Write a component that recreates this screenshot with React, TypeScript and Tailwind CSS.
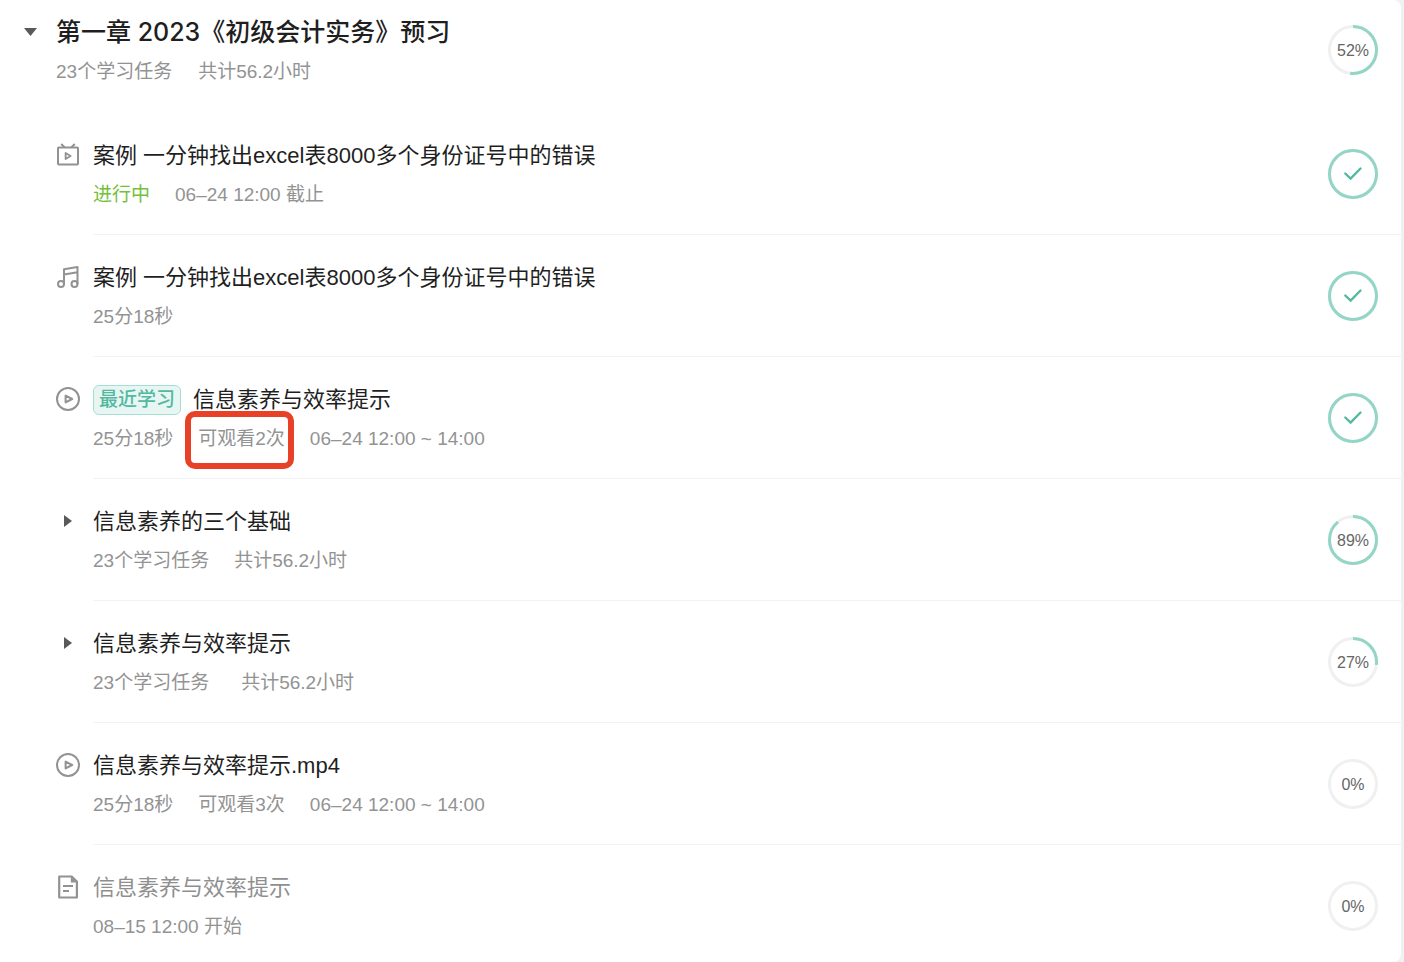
import { ReactNode, useState } from 'react';

interface Lesson {
  icon: 'live' | 'audio' | 'video' | 'doc' | 'folder';
  title: string;
  recent?: boolean;
  locked?: boolean;
  status?: string;
  meta: string[];
  wide?: boolean;
  marked?: number;
  progress: number;
}

const lessons: Lesson[] = [
  {
    icon: 'live',
    title: '案例 一分钟找出excel表8000多个身份证号中的错误',
    status: '进行中',
    meta: ['06–24 12:00 截止'],
    progress: 100,
  },
  {
    icon: 'audio',
    title: '案例 一分钟找出excel表8000多个身份证号中的错误',
    meta: ['25分18秒'],
    progress: 100,
  },
  {
    icon: 'video',
    title: '信息素养与效率提示',
    recent: true,
    meta: ['25分18秒', '可观看2次', '06–24 12:00 ~ 14:00'],
    marked: 1,
    progress: 100,
  },
  {
    icon: 'folder',
    title: '信息素养的三个基础',
    meta: ['23个学习任务', '共计56.2小时'],
    progress: 89,
  },
  {
    icon: 'folder',
    title: '信息素养与效率提示',
    meta: ['23个学习任务', '共计56.2小时'],
    wide: true,
    progress: 27,
  },
  {
    icon: 'video',
    title: '信息素养与效率提示.mp4',
    meta: ['25分18秒', '可观看3次', '06–24 12:00 ~ 14:00'],
    progress: 0,
  },
  {
    icon: 'doc',
    title: '信息素养与效率提示',
    locked: true,
    meta: ['08–15 12:00 开始'],
    progress: 0,
  },
];

const icons: Record<Exclude<Lesson['icon'], 'folder'>, ReactNode> = {
  live: (
    <>
      <rect x="2" y="4.500" width="20" height="17" rx="0.8" />
      <path d="M5.200 1 8.800 4.500M18.800 1 15.200 4.500" />
      <path d="M9.600 10v6l5-3z" strokeWidth="1.800" />
    </>
  ),
  audio: (
    <>
      <circle cx="5" cy="19" r="3" />
      <circle cx="18.500" cy="19" r="3" />
      <path d="M8 19V4.200L21.500 2v17M8 9.500l13.500-2.200" />
    </>
  ),
  video: (
    <>
      <circle cx="12" cy="12" r="11" />
      <path d="M9.600 8.600v6.800l6.600-3.400z" />
    </>
  ),
  doc: (
    <>
      <path d="M3.200 1.500h12.500l5.200 5v16H3.200z" strokeWidth="2.200" />
      <path d="M14.800 1.500v6h6z" fill="currentColor" stroke="none" />
      <path d="M7 11h10M7 16h6" />
    </>
  ),
};

function LessonIcon({ name }: { name: keyof typeof icons }) {
  return (
    <svg
      viewBox="0 0 24 24"
      className="size-6 text-[#929292]"
      fill="none"
      stroke="currentColor"
      strokeWidth="2"
      strokeLinejoin="round"
      aria-hidden="true"
    >
      {icons[name]}
    </svg>
  );
}

function Progress({ value }: { value: number }) {
  const done = value === 100;
  return (
    <div className="grid size-[50px] shrink-0 place-items-center">
      <svg viewBox="0 0 50 50" className="col-start-1 row-start-1 size-full" fill="none" strokeWidth="3">
        <circle cx="25" cy="25" r="23.5" stroke="#f0f0f0" />
        {value > 0 && (
          <circle
            cx="25"
            cy="25"
            r="23.5"
            stroke="#93d5c6"
            pathLength="100"
            strokeDasharray={`${value} 100`}
            transform="rotate(-90 25 25)"
          />
        )}
        {done && <path d="M17.300 24.500 22.600 29.500 32.500 19.500" stroke="#52b9a0" strokeWidth="2.400" strokeLinecap="round" />}
      </svg>
      {!done && <span className="col-start-1 row-start-1 pt-0.5 text-base text-[#666]">{value}%</span>}
    </div>
  );
}

function LessonRow({ lesson, last }: { lesson: Lesson; last: boolean }) {
  const [open, setOpen] = useState(false);

  return (
    <li className="flex pl-14">
      <div className="mr-[13px] flex h-[84px] w-6 shrink-0 items-center justify-center">
        {lesson.icon === 'folder' ? (
          <button
            type="button"
            aria-label={lesson.title}
            aria-expanded={open}
            onClick={() => setOpen(!open)}
            className="flex size-6 items-center justify-center"
          >
            <svg viewBox="0 0 8 14" className={open ? 'h-[14px] w-2 rotate-90' : 'h-[14px] w-2'}>
              <path d="M0 1v12l8-6z" fill="#595959" />
            </svg>
          </button>
        ) : (
          <LessonIcon name={lesson.icon} />
        )}
      </div>
      <div
        className={
          last
            ? 'flex flex-1 items-center justify-between pt-[26px] pr-[23px] pb-[21px]'
            : 'flex flex-1 items-center justify-between border-b border-[#f2f2f2] pt-[26px] pr-[23px] pb-[25px]'
        }
      >
        <div className="pt-0.5">
          <div className="flex h-[30px] items-center gap-3">
            {lesson.recent && (
              <span className="flex h-[30px] items-center rounded-md border border-[#a5dfd2] bg-[#e8f6f3] px-[5px] text-[19px] font-medium text-[#52b9a0]">
                最近学习
              </span>
            )}
            <h3 className={lesson.locked ? 'text-[22px] leading-[30px] text-[#8f8f8f]' : 'text-[22px] leading-[30px] text-[#1f1f1f]'}>
              {lesson.title}
            </h3>
          </div>
          <div
            className={
              lesson.wide
                ? 'mt-[10px] flex gap-8 text-[19px] leading-7 text-[#939393]'
                : 'mt-[10px] flex gap-[25px] text-[19px] leading-7 text-[#939393]'
            }
          >
            {lesson.status && <span className="text-[#73c13b]">{lesson.status}</span>}
            {lesson.meta.map((text, i) => (
              <span key={text} className="relative">
                {text}
                {lesson.marked === i && (
                  <span className="absolute -top-[14px] -right-[9px] -bottom-4 -left-[13px] rounded-[10px] border-6 border-[#e84127]" />
                )}
              </span>
            ))}
          </div>
        </div>
        <Progress value={lesson.progress} />
      </div>
    </li>
  );
}

export default function App() {
  const [open, setOpen] = useState(true);

  return (
    <main className="min-h-screen bg-[#f1f1f3] pr-[3px] font-['Liberation_Sans','Noto_Sans_CJK_SC',sans-serif]">
      <section className="rounded-r-lg bg-white">
        <header className="flex items-center justify-between pt-[14px] pr-[23px] pb-[27px] pl-6">
          <div className="flex">
            <button
              type="button"
              aria-label="第一章"
              aria-expanded={open}
              onClick={() => setOpen(!open)}
              className="mr-[18px] flex h-9 w-[14px] items-center"
            >
              <svg viewBox="0 0 14 8" className={open ? 'h-2 w-[14px]' : 'h-2 w-[14px] -rotate-90'}>
                <path d="M0 0h13L6.500 8z" fill="#595959" />
              </svg>
            </button>
            <div>
              <h2 className="font-['Inter','Noto_Sans_CJK_SC',sans-serif] text-[25px] leading-9 font-medium text-[#1f1f1f]">
                第一章 2023《初级会计实务》预习
              </h2>
              <p className="mt-2 flex gap-[26px] text-[19px] leading-7 text-[#939393]">
                <span>23个学习任务</span>
                <span>共计56.2小时</span>
              </p>
            </div>
          </div>
          <Progress value={52} />
        </header>
        {open && (
          <ul>
            {lessons.map((lesson, i) => (
              <LessonRow key={i} lesson={lesson} last={i === lessons.length - 1} />
            ))}
          </ul>
        )}
      </section>
    </main>
  );
}
